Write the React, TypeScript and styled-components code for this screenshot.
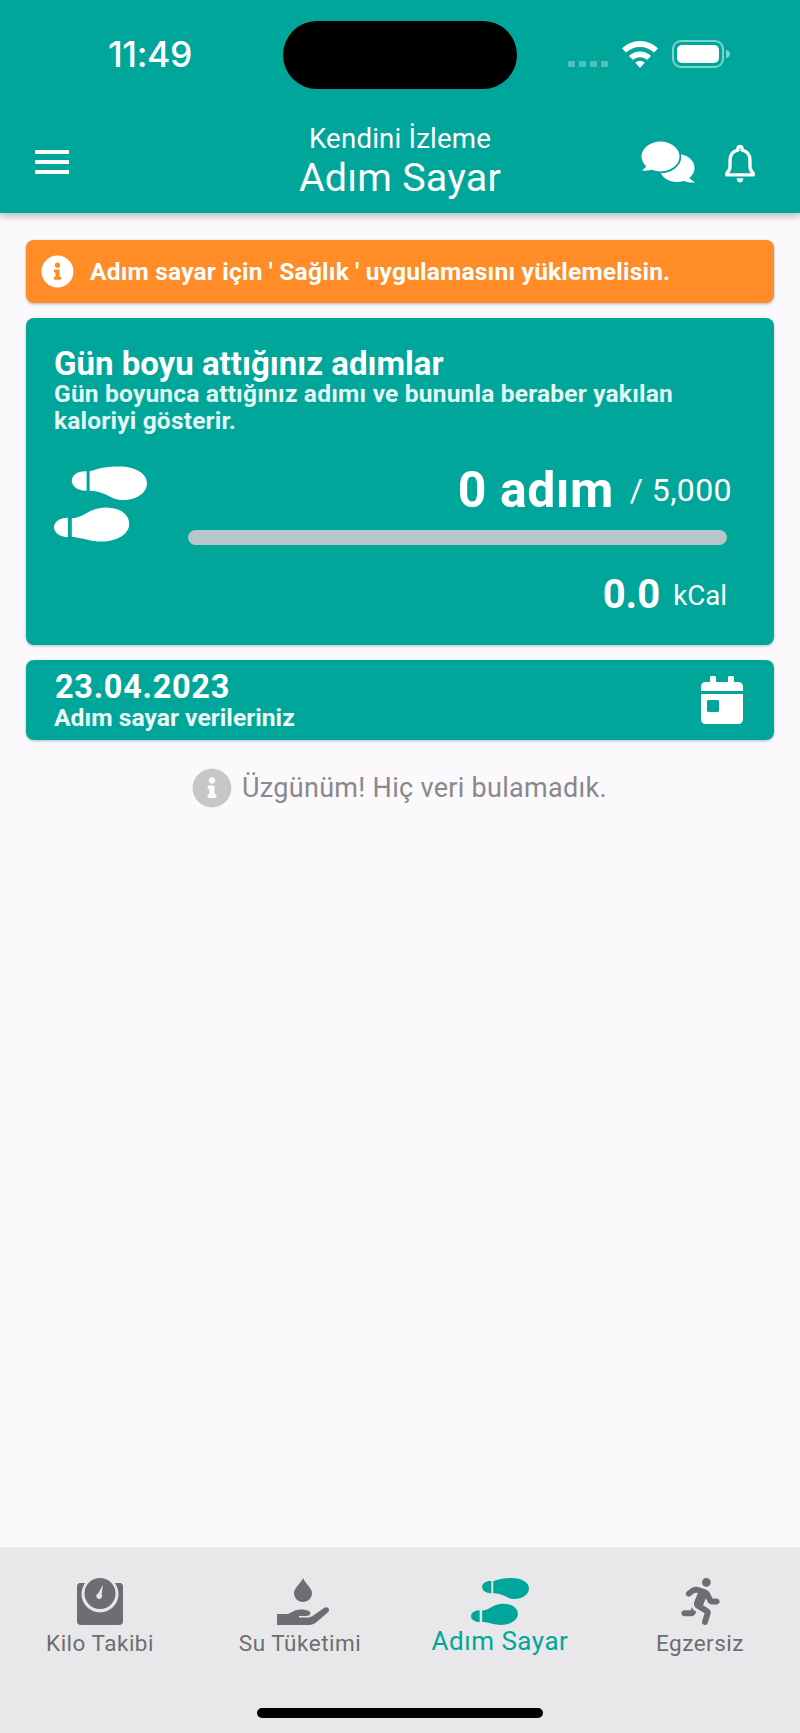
import React from "react";
import styled, { createGlobalStyle } from "styled-components";
import { FaCalendarDay, FaInfoCircle, FaRunning } from "react-icons/fa";

const Global = createGlobalStyle`
  html, body { margin: 0; padding: 0; background: #fbf9fc; }
  body { font-family: Roboto, "Liberation Sans", sans-serif; }
  * { box-sizing: border-box; }
`;

const teal = "#01a69a";

const Page = styled.div`
  width: 800px;
  height: 1733px;
  display: flex;
  flex-direction: column;
  background: #fbf9fc;
  overflow: hidden;
`;

const Header = styled.header`
  height: 213px;
  flex: none;
  background: ${teal};
  box-shadow: 0 3px 8px rgba(0, 0, 0, 0.28);
  display: flex;
  flex-direction: column;
  color: #fff;
`;

const StatusBar = styled.div`
  height: 110px;
  flex: none;
  padding: 21px 70px 0 108px;
  display: flex;
  align-items: flex-start;
`;

const Time = styled.div`
  width: 175px;
  height: 68px;
  flex: none;
  font-family: Inter, Roboto, sans-serif;
  font-size: 35.5px;
  font-weight: 500;
  line-height: 68px;
  letter-spacing: -0.4px;
`;

const Island = styled.div`
  width: 234px;
  height: 68px;
  flex: none;
  background: #000;
  border-radius: 34px;
`;

const StatusIcons = styled.div`
  display: flex;
  align-items: flex-end;
  margin-left: 51px;
  padding-top: 19px;
`;

const SignalDots = styled.div`
  display: flex;
  gap: 4px;
  margin-right: 14px;
  margin-bottom: 1px;
`;

const SignalDot = styled.span`
  width: 7px;
  height: 6px;
  background: rgba(255, 255, 255, 0.3);
  border-radius: 1px;
`;

const NavBar = styled.div`
  flex: 1;
  display: grid;
  grid-template-columns: 1fr auto 1fr;
  align-items: start;
  padding: 0 44px;
`;

const MenuButton = styled.div`
  width: 34px;
  margin: 40px 0 0 -9px;
  display: flex;
  flex-direction: column;
  gap: 6.5px;
`;

const MenuLine = styled.span`
  height: 3.5px;
  background: #fff;
  display: block;
`;

const Titles = styled.div`
  display: flex;
  flex-direction: column;
  align-items: center;
  padding-top: 13px;
`;

const SubTitle = styled.div`
  font-size: 27.6px;
  line-height: 32px;
  letter-spacing: 0.2px;
`;

const MainTitle = styled.div`
  font-size: 39.5px;
  line-height: 46px;
  letter-spacing: 0.2px;
`;

const NavActions = styled.div`
  display: flex;
  justify-content: flex-end;
  align-items: flex-end;
  gap: 29px;
  margin-top: 31px;
`;

const Content = styled.main`
  flex: 1;
  display: flex;
  flex-direction: column;
  padding: 27px 26px 0;
`;

const Alert = styled.div`
  height: 63px;
  background: #ff8c26;
  border-radius: 8px;
  box-shadow: 0 1px 3px rgba(0, 0, 0, 0.3);
  display: flex;
  align-items: center;
  gap: 16px;
  padding: 0 15px;
  color: #fff;
  font-size: 24.5px;
  font-weight: 700;
  letter-spacing: 0.2px;
`;

const Card = styled.section`
  background: ${teal};
  border-radius: 8px;
  box-shadow: 0 1px 3px rgba(0, 0, 0, 0.25);
  color: #fff;
`;

const StepsCard = styled(Card)`
  height: 327px;
  margin-top: 15px;
  padding: 29px 29px 0 28px;
`;

const CardTitle = styled.h2`
  margin: 0;
  font-size: 33px;
  line-height: 33px;
  font-weight: 700;
`;

const CardText = styled.p`
  margin: 0;
  font-size: 24.5px;
  line-height: 27px;
  font-weight: 700;
  letter-spacing: 0.2px;
  color: #e4f6f4;
`;

const StepsRow = styled.div`
  display: flex;
  margin-top: 28px;
`;

const FeetSlot = styled.div`
  width: 134px;
  flex: none;
  padding-top: 4px;
`;

const StepsInfo = styled.div`
  flex: 1;
  display: flex;
  flex-direction: column;
  align-items: stretch;
  padding-right: 18px;
`;

const StepsLine = styled.div`
  display: flex;
  justify-content: flex-end;
  align-items: center;
  margin-right: -5px;
  height: 56px;
`;

const StepsValue = styled.span`
  font-size: 50px;
  line-height: 56px;
  font-weight: 700;
  letter-spacing: 0.5px;
`;

const StepsGoal = styled.span`
  font-size: 32px;
  margin-left: 16px;
  letter-spacing: 0.4px;
`;

const Bar = styled.div`
  height: 15px;
  margin-top: 12px;
  border-radius: 8px;
  background: #b5c7c9;
`;

const CalLine = styled.div`
  display: flex;
  justify-content: flex-end;
  align-items: center;
  margin-top: 28px;
`;

const CalValue = styled.span`
  font-size: 40px;
  line-height: 44px;
  font-weight: 700;
`;

const CalUnit = styled.span`
  font-size: 27.7px;
  margin-left: 13px;
`;

const DateCard = styled(Card)`
  height: 80px;
  margin-top: 15px;
  padding: 10px 28px 0 29px;
  display: flex;
  justify-content: space-between;
`;

const DateText = styled.div`
  display: flex;
  flex-direction: column;
`;

const DateValue = styled.div`
  font-size: 32.5px;
  line-height: 34px;
  font-weight: 700;
  letter-spacing: 0.7px;
`;

const DateLabel = styled.div`
  font-size: 24.7px;
  line-height: 28px;
  font-weight: 700;
  color: #ecf9f7;
  margin-left: -1px;
`;

const Empty = styled.div`
  display: flex;
  justify-content: center;
  align-items: center;
  gap: 10px;
  margin-top: 28px;
  font-size: 27px;
  line-height: 40px;
  color: #8a888d;
  padding-right: 1px;
  letter-spacing: 0.3px;
`;

const TabBar = styled.nav`
  height: 186px;
  flex: none;
  background: #e8e8ea;
  display: flex;
  flex-direction: column;
  align-items: center;
`;

const Tabs = styled.div`
  width: 100%;
  height: 161px;
  display: grid;
  grid-template-columns: 200px 200px 200px 200px;
  padding-top: 31px;
`;

const Tab = styled.div<{ $active?: boolean }>`
  display: flex;
  flex-direction: column;
  align-items: center;
  color: ${(p) => (p.$active ? teal : "#6e6d71")};
`;

const TabIconSlot = styled.div`
  height: 47px;
  display: flex;
  align-items: center;
  justify-content: center;
`;

const TabLabel = styled.span<{ $active?: boolean }>`
  font-size: ${(p) => (p.$active ? "26px" : "22.5px")};
  line-height: 30px;
  margin-top: ${(p) => (p.$active ? "1px" : "3px")};
  letter-spacing: 0.5px;
`;

const HomeIndicator = styled.div`
  width: 286px;
  height: 10px;
  background: #000;
  border-radius: 5px;
`;

const Feet = ({ width, height }: { width: number; height: number }) => (
  <svg width={width} height={height} viewBox="0 0 94 76" fill="currentColor">
    <path d="M33 5V24.5C24 25 18 20 18 14.5C18 9 24 4.5 33 5Z" />
    <path d="M36 5C44 2 54 0 66 0C82 0 94 7 94 17C94 27 83 34 70 34C60 34 54 28 46 26C42 25 39 24.5 36 24.5Z" />
    <path d="M14 52V71.5C6 71.5 0 67 0 61.5C0 56 6 52 14 52Z" />
    <path d="M18 52.5C27 52 32 47 38 44.5C43 42.5 48 41.5 52 41.5C66 41.5 76 48 76 58C76 69 63 76 48 76C38 76 28 72 18 71Z" />
  </svg>
);

const ScaleIcon = () => (
  <svg width="46" height="47" viewBox="0 0 46 47">
    <rect x="0" y="5" width="46" height="42" rx="4" fill="currentColor" />
    <circle cx="23" cy="16" r="18.5" fill="#e8e8ea" />
    <path d="M0 9C0 6 2 5 4 5H7C4 9 2.5 12 2.5 16C2.5 22 5 27 9 31V33H0Z" fill="currentColor" />
    <path d="M46 9C46 6 44 5 42 5H39C42 9 43.5 12 43.5 16C43.5 22 41 27 37 31V33H46Z" fill="currentColor" />
    <path d="M4 30C9 36 16 38 23 38C30 38 37 36 42 30V36H4Z" fill="currentColor" />
    <circle cx="23" cy="15.5" r="15.5" fill="currentColor" />
    <path d="M26 7L24.6 16.8A2.8 2.8 0 1 1 21 15.6Z" fill="#e8e8ea" />
  </svg>
);

const HandDropIcon = () => (
  <svg width="52" height="47" viewBox="0 0 52 47" fill="currentColor" style={{ marginLeft: 5 }}>
    <path d="M26 0C28 5 35 10 35 15C35 20 31 24 26 24C21 24 17 20 17 15C17 10 24 5 26 0Z" />
    <path d="M0 36H11L18 32.5C21 31 27 31 31 32.5C33 33.2 34 35 33 36.5C32 38 30 38 27 38H22V39.5H31C33 39.5 35 38.5 37 37L47 30C49 28.7 51 29.3 52 31C52.5 32.5 52 33.5 50.5 34.7L39 44.5C37 46 35 47 32 47H0Z" />
  </svg>
);

const ChatIcon = () => (
  <svg width="54" height="42" viewBox="0 0 54 42" fill="#fff">
    <ellipse cx="36" cy="27" rx="17.5" ry="14" />
    <path d="M44 34L54 41.5C49 42 44 41 40 38Z" />
    <ellipse cx="19.5" cy="15.5" rx="19.5" ry="15.5" stroke={teal} strokeWidth="2.5" />
    <ellipse cx="19.5" cy="15.5" rx="19" ry="15" />
    <path d="M7 24L1 29.5C6 30 11 29 15 27Z" />
  </svg>
);

const BellIcon = () => (
  <svg width="32" height="38" viewBox="0 0 32 40" fill="none" stroke="#fff">
    <path d="M16 1.5a2.2 2.2 0 0 1 2.2 2.2V5.4C23.5 6.5 26.5 10.6 26.5 16V23C26.5 26 28 28 30 30.2V31.5H2V30.2C4 28 5.5 26 5.5 23V16C5.5 10.6 8.5 6.5 13.8 5.4V3.7A2.2 2.2 0 0 1 16 1.5Z" strokeWidth="3.5" strokeLinejoin="round" />
    <path d="M12.5 35H19.5C19.5 37.5 18 39.5 16 39.5C14 39.5 12.5 37.5 12.5 35Z" fill="#fff" stroke="none" />
  </svg>
);

const WifiIcon = () => (
  <svg width="36" height="27" viewBox="0 0 36 27" fill="#fff" style={{ marginRight: 14 }}>
    <path d="M18 0C25 0 31 2.8 36 7.5L32 11.5C28 8 23.5 6 18 6C12.5 6 8 8 4 11.5L0 7.5C5 2.8 11 0 18 0Z" />
    <path d="M18 10.5C22.5 10.5 26 12 29 15L25 19C23 17.2 20.8 16.2 18 16.2C15.2 16.2 13 17.2 11 19L7 15C10 12 13.5 10.5 18 10.5Z" />
    <path d="M18 20C20 20 21.5 20.6 22.8 21.8L18 27L13.2 21.8C14.5 20.6 16 20 18 20Z" />
  </svg>
);

const BatteryIcon = () => (
  <svg width="58" height="28" viewBox="0 0 58 28">
    <rect x="1" y="1" width="50" height="26" rx="8" fill="none" stroke="#7fd3cd" strokeWidth="2" />
    <rect x="5" y="5" width="42" height="18" rx="5" fill="#fff" />
    <path d="M54 10C56.5 10.5 58 12 58 14C58 16 56.5 17.5 54 18Z" fill="#7fd3cd" />
  </svg>
);

const tabs = [
  { label: "Kilo Takibi", icon: <ScaleIcon /> },
  { label: "Su Tüketimi", icon: <HandDropIcon /> },
  { label: "Adım Sayar", icon: <Feet width={58} height={47} />, active: true },
  { label: "Egzersiz", icon: <FaRunning size={47} /> },
];

export default function App() {
  return (
    <Page>
      <Global />
      <Header>
        <StatusBar>
          <Time>11:49</Time>
          <Island />
          <StatusIcons>
            <SignalDots>
              <SignalDot />
              <SignalDot />
              <SignalDot />
              <SignalDot />
            </SignalDots>
            <WifiIcon />
            <BatteryIcon />
          </StatusIcons>
        </StatusBar>
        <NavBar>
          <MenuButton>
            <MenuLine />
            <MenuLine />
            <MenuLine />
          </MenuButton>
          <Titles>
            <SubTitle>Kendini İzleme</SubTitle>
            <MainTitle>Adım Sayar</MainTitle>
          </Titles>
          <NavActions>
            <ChatIcon />
            <BellIcon />
          </NavActions>
        </NavBar>
      </Header>
      <Content>
        <Alert>
          <FaInfoCircle size={33} color="#fff" />
          <span>Adım sayar için ' Sağlık ' uygulamasını yüklemelisin.</span>
        </Alert>
        <StepsCard>
          <CardTitle>Gün boyu attığınız adımlar</CardTitle>
          <CardText>Gün boyunca attığınız adımı ve bununla beraber yakılan kaloriyi gösterir.</CardText>
          <StepsRow>
            <FeetSlot>
              <Feet width={93} height={76} />
            </FeetSlot>
            <StepsInfo>
              <StepsLine>
                <StepsValue>0 adım</StepsValue>
                <StepsGoal>/ 5,000</StepsGoal>
              </StepsLine>
              <Bar />
              <CalLine>
                <CalValue>0.0</CalValue>
                <CalUnit>kCal</CalUnit>
              </CalLine>
            </StepsInfo>
          </StepsRow>
        </StepsCard>
        <DateCard>
          <DateText>
            <DateValue>23.04.2023</DateValue>
            <DateLabel>Adım sayar verileriniz</DateLabel>
          </DateText>
          <FaCalendarDay size={48} color="#fff" style={{ marginTop: 6 }} />
        </DateCard>
        <Empty>
          <FaInfoCircle size={40} color="#c7c6c9" />
          <span>Üzgünüm! Hiç veri bulamadık.</span>
        </Empty>
      </Content>
      <TabBar>
        <Tabs>
          {tabs.map((t) => (
            <Tab key={t.label} $active={t.active}>
              <TabIconSlot>{t.icon}</TabIconSlot>
              <TabLabel $active={t.active}>{t.label}</TabLabel>
            </Tab>
          ))}
        </Tabs>
        <HomeIndicator />
      </TabBar>
    </Page>
  );
}
